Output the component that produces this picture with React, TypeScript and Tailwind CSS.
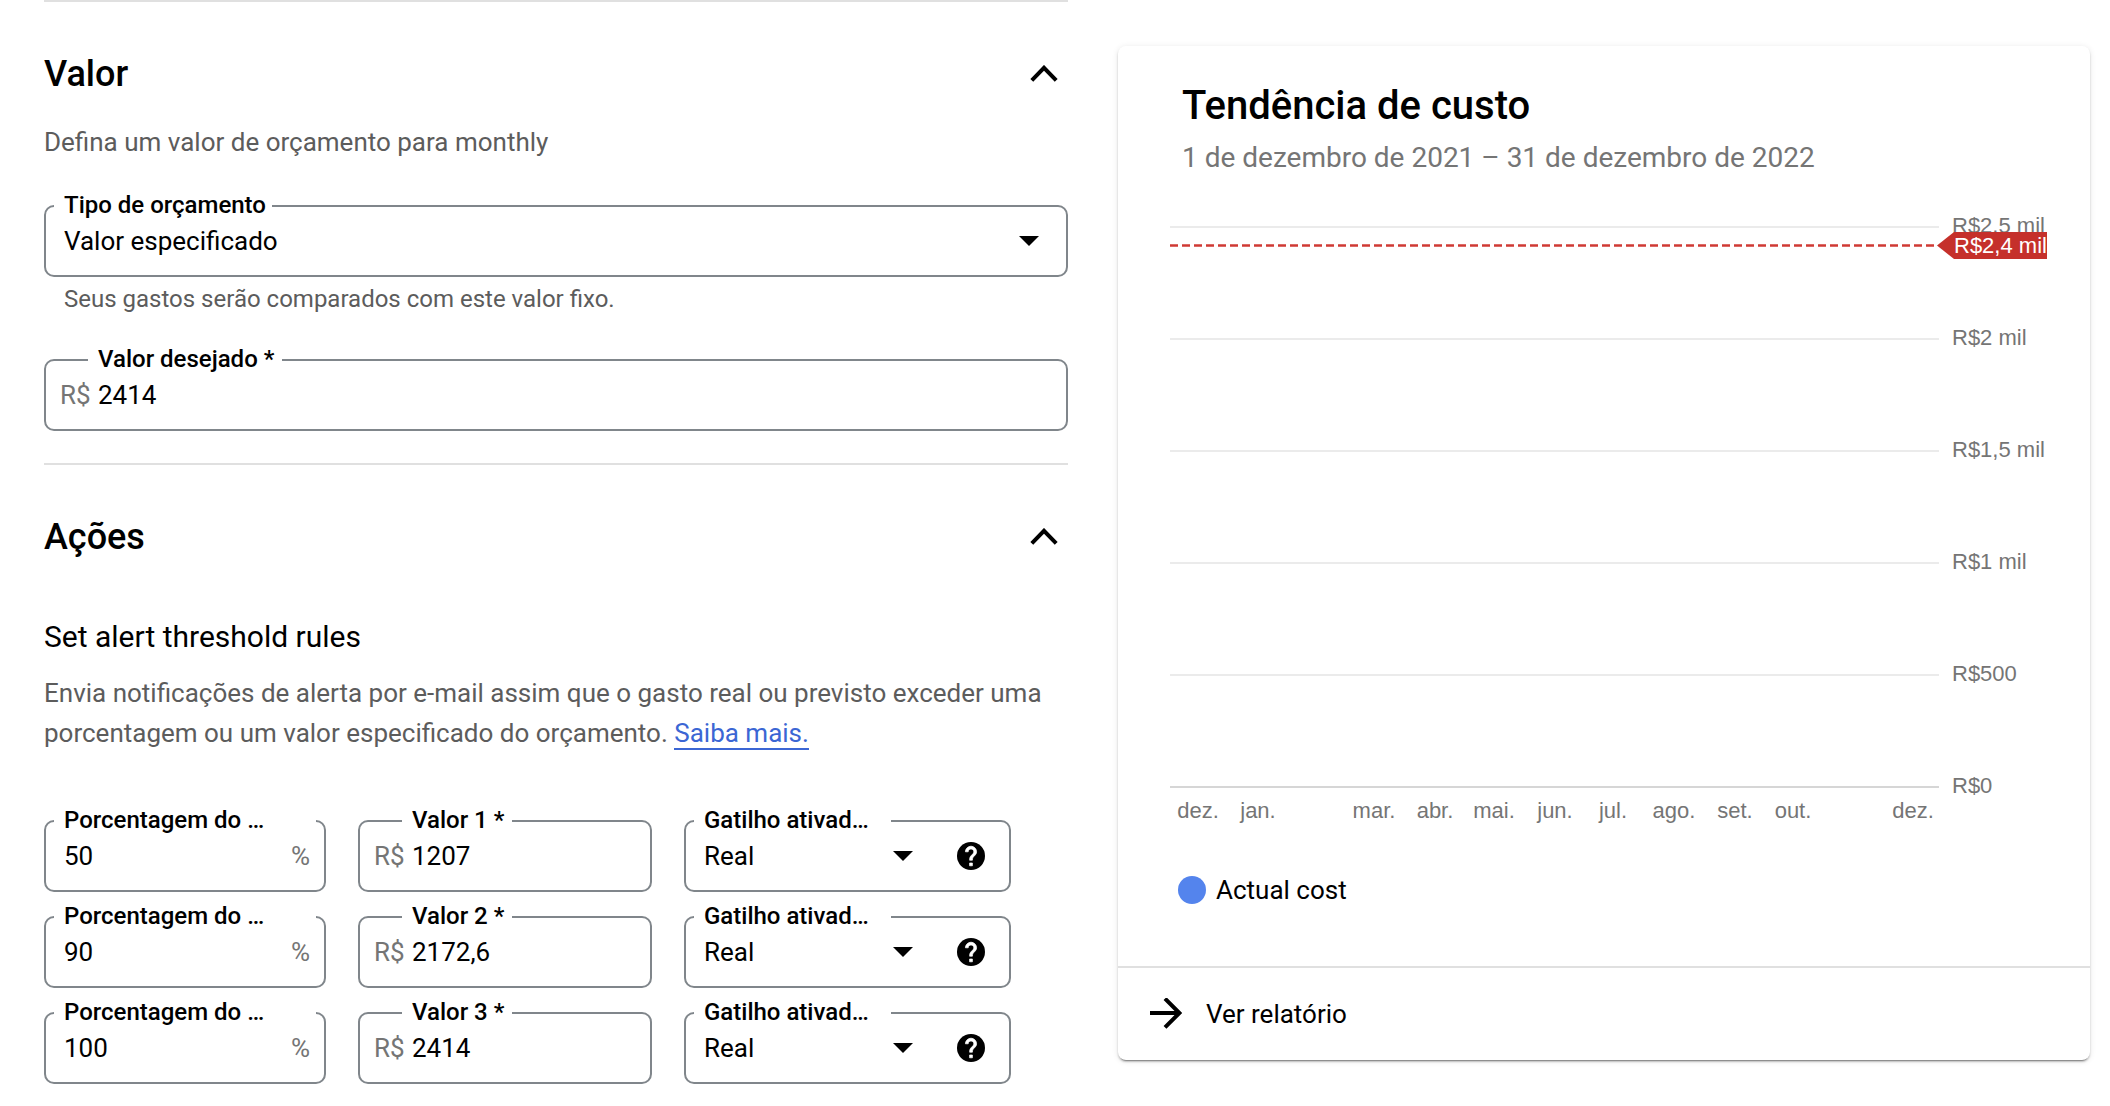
import React, { useId } from "react";

function Chevron() {
  return (
    <svg className="h-[18px] w-7" viewBox="0 0 28 18" fill="none" aria-hidden="true">
      <path d="M1.8 15.4 14 2.8l12.2 12.6" stroke="#000" strokeWidth="4" />
    </svg>
  );
}

function Caret() {
  return (
    <svg className="h-2.5 w-5" viewBox="0 0 20 10" aria-hidden="true">
      <path d="M0 0h20L10 10z" />
    </svg>
  );
}

function HelpIcon() {
  return (
    <svg className="size-7" viewBox="2 2 20 20" aria-hidden="true">
      <circle cx="12" cy="12" r="10" />
      <path
        d="M11 17h2v2h-2zM15.07 11.25l-.9.92C13.45 12.9 13 13.5 13 15h-2v-.5c0-1.1.45-2.1 1.17-2.83l1.24-1.26c.37-.36.59-.86.59-1.41 0-1.1-.9-2-2-2s-2 .9-2 2H8c0-2.21 1.79-4 4-4s4 1.79 4 4c0 .88-.36 1.68-.93 2.25z"
        fill="#fff"
        stroke="#fff"
        strokeWidth="0.5"
      />
    </svg>
  );
}

function ArrowRight() {
  return (
    <svg className="size-8" viewBox="0 1 32 32" fill="none" stroke="#000" strokeWidth="4" aria-hidden="true">
      <path d="M0 16h29M15 1.6 29.4 16 15 30.4" />
    </svg>
  );
}

function Outline({ children }: { children: React.ReactNode }) {
  return (
    <div className="relative flex h-[72px] items-start rounded-[10px] border-2 border-[#80868b] pt-[19px]">
      {children}
    </div>
  );
}

const labelBase = "absolute -top-4 h-7 overflow-hidden bg-white pl-2.5 text-2xl leading-7 font-medium whitespace-nowrap";

function MoneyField({ label, value }: { label: string; value: string }) {
  const id = useId();
  return (
    <Outline>
      <label htmlFor={id} className={`${labelBase} left-[42px] pr-2`}>
        {label}
      </label>
      <span className="w-[52px] shrink-0 pl-3.5 text-[26px] leading-[30px] text-[#757575]">R$</span>
      <input id={id} defaultValue={value} className="h-[30px] min-w-0 flex-1 text-[26px] leading-[30px] outline-none" />
    </Outline>
  );
}

function PercentField({ value }: { value: string }) {
  const id = useId();
  return (
    <Outline>
      <label htmlFor={id} className={`${labelBase} inset-x-2`}>
        Porcentagem do …
      </label>
      <input id={id} defaultValue={value} className="h-[30px] min-w-0 flex-1 pl-[18px] text-[26px] leading-[30px] outline-none" />
      <span className="pr-3.5 text-[26px] leading-[30px] text-[#757575]">%</span>
    </Outline>
  );
}

function BudgetTypeField() {
  return (
    <Outline>
      <label htmlFor="budget-type" className={`${labelBase} left-2 pr-1.5`}>
        Tipo de orçamento
      </label>
      <select id="budget-type" className="h-[30px] flex-1 appearance-none pl-[18px] text-[26px] leading-[30px] outline-none">
        <option>Valor especificado</option>
      </select>
      <span className="pointer-events-none absolute top-[29px] right-[27px] flex">
        <Caret />
      </span>
    </Outline>
  );
}

function TriggerField() {
  const id = useId();
  return (
    <Outline>
      <label htmlFor={id} className={`${labelBase} left-2 w-[197px]`}>
        Gatilho ativad…
      </label>
      <div className="relative min-w-0 flex-1">
        <select id={id} className="block h-[30px] w-full appearance-none pl-[18px] text-[26px] leading-[30px] outline-none">
          <option>Real</option>
        </select>
        <span className="pointer-events-none absolute top-2.5 right-0 flex">
          <Caret />
        </span>
      </div>
      <button type="button" aria-label="Ajuda" className="mt-px mr-6 ml-11">
        <HelpIcon />
      </button>
    </Outline>
  );
}

function Section({ title, children }: { title: string; children: React.ReactNode }) {
  return (
    <section className="border-t-2 border-[#e0e0e0] pt-[50px]">
      <div className="flex items-center justify-between pr-2.5">
        <h2 className="text-4xl leading-[44px] font-medium">{title}</h2>
        <button type="button" aria-label={`Recolher ${title}`}>
          <Chevron />
        </button>
      </div>
      {children}
    </section>
  );
}

const yTicks = [
  { y: 16, label: "R$2,5 mil" },
  { y: 128, label: "R$2 mil" },
  { y: 240, label: "R$1,5 mil" },
  { y: 352, label: "R$1 mil" },
  { y: 464, label: "R$500" },
  { y: 576, label: "R$0" },
];

const months = [
  { x: 80, label: "dez." },
  { x: 140, label: "jan." },
  { x: 256, label: "mar." },
  { x: 317, label: "abr." },
  { x: 376, label: "mai." },
  { x: 437, label: "jun." },
  { x: 495, label: "jul." },
  { x: 556, label: "ago." },
  { x: 617, label: "set." },
  { x: 675, label: "out." },
  { x: 795, label: "dez." },
];

function CostChart() {
  return (
    <svg
      className="mt-8 block w-full font-['Liberation_Sans',Arial,sans-serif] text-[22px]"
      viewBox="0 0 972 630"
      role="img"
      aria-label="Tendência de custo"
    >
      {yTicks.map((t) => (
        <g key={t.y}>
          <rect x="52" y={t.y} width="769" height="2" fill={t.y === 576 ? "#d6d6d6" : "#ebebeb"} />
          <text x="834" y={t.y + 7} fill="#757575">
            {t.label}
          </text>
        </g>
      ))}
      {months.map((m) => (
        <text key={m.x} x={m.x} y="608" textAnchor="middle" fill="#757575">
          {m.label}
        </text>
      ))}
      <path d="M52 35.5h768" stroke="#cf3a34" strokeWidth="2.4" strokeDasharray="8 4" />
      <path d="M819 35.5 836 22h93v27h-93z" fill="#c5302b" />
      <text x="836" y="43" fill="#fff">
        R$2,4 mil
      </text>
    </svg>
  );
}

export default function App() {
  return (
    <main className="grid grid-cols-[minmax(0,1024fr)_minmax(0,972fr)] items-start gap-x-[50px] bg-white pr-5 pl-11 font-[Roboto,sans-serif] text-black">
      <div>
        <Section title="Valor">
          <p className="mt-[26px] mb-[43px] text-[26px] leading-10 text-[#5c5c5c]">
            Defina um valor de orçamento para monthly
          </p>
          <BudgetTypeField />
          <p className="mt-2 mb-[46px] pl-5 text-2xl leading-7 text-[#5c5c5c]">
            Seus gastos serão comparados com este valor fixo.
          </p>
          <div className="mb-8">
            <MoneyField label="Valor desejado *" value="2414" />
          </div>
        </Section>
        <Section title="Ações">
          <h3 className="mt-[58px] text-3xl leading-10">Set alert threshold rules</h3>
          <p className="mt-4 mb-[67px] text-[26px] leading-10 text-[#5c5c5c]">
            Envia notificações de alerta por e-mail assim que o gasto real ou previsto exceder uma porcentagem ou um
            valor especificado do orçamento.{" "}
            <a href="#saiba-mais" className="border-b-2 border-[#3b66d4] text-[#3b66d4]">
              Saiba mais.
            </a>
          </p>
          <div className="mb-5 grid grid-cols-[minmax(0,282fr)_minmax(0,294fr)_minmax(0,327fr)] gap-x-8 gap-y-6 pr-[57px]">
            <PercentField value="50" />
            <MoneyField label="Valor 1 *" value="1207" />
            <TriggerField />
            <PercentField value="90" />
            <MoneyField label="Valor 2 *" value="2172,6" />
            <TriggerField />
            <PercentField value="100" />
            <MoneyField label="Valor 3 *" value="2414" />
            <TriggerField />
          </div>
        </Section>
      </div>

      <aside className="mt-[46px] rounded-lg shadow-[0_3px_1px_-2px_rgba(0,0,0,0.3),0_2px_2px_0_rgba(0,0,0,0.2),0_1px_6px_0_rgba(0,0,0,0.1)]">
        <h2 className="pt-9 pl-16 text-[40px] leading-[48px] font-medium">Tendência de custo</h2>
        <p className="mt-2 pl-16 text-[28px] leading-10 text-[#757575]">1 de dezembro de 2021 – 31 de dezembro de 2022</p>
        <CostChart />
        <div className="flex items-center gap-2.5 pt-9 pb-[62px] pl-[60px]">
          <span className="size-7 rounded-full bg-[#5484ed]" />
          <span className="text-[26px] leading-7">Actual cost</span>
        </div>
        <a href="#relatorio" className="flex h-[94px] items-center gap-6 border-t-2 border-[#e0e0e0] pl-8">
          <ArrowRight />
          <span className="text-[26px] leading-8">Ver relatório</span>
        </a>
      </aside>
    </main>
  );
}
